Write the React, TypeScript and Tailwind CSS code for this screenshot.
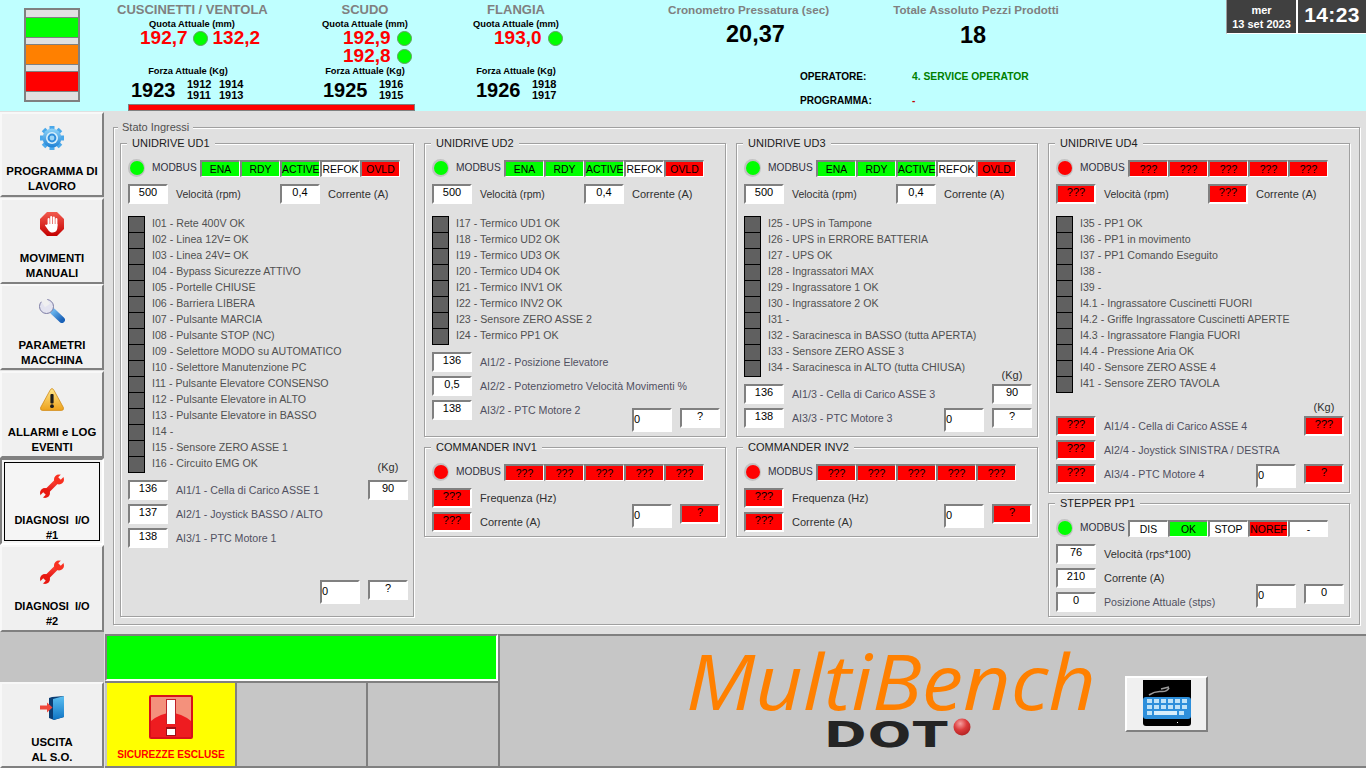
import React from "react";

const BOX = "border-t-2 border-l-2 border-r-2 border-b-2 border-t-[#808080] border-l-[#808080] border-r-white border-b-white";

function Val({ v, red, wide, left }: { v: string; red?: boolean; wide?: boolean; left?: boolean }) {
  return (
    <div className={`${BOX} w-[40px] shrink-0 text-[11px] leading-[13px] text-black ${wide ? "h-[24px] pt-[3px]" : "h-[20px]"} ${red ? "bg-[#ff0000]" : "bg-white"} ${left ? "text-left" : "text-center"}`}>
      {v}
    </div>
  );
}

function Led({ red }: { red?: boolean }) {
  return (
    <div className="w-[17px] h-[18px] shrink-0 rounded-full bg-[#c2c2c2] flex items-center justify-center">
      <div className={`w-[14px] h-[14px] rounded-full ${red ? "bg-[#ff0000]" : "bg-[#00ff00]"}`} />
    </div>
  );
}

type S = [string, "g" | "w" | "r"];
function Modbus({ red, items }: { red?: boolean; items: S[] }) {
  return (
    <div className="flex h-[18px] mt-[9px] items-start">
      <Led red={red} />
      <div className="ml-[7px] w-[48px] text-[10.2px] leading-[17px] text-[#303040]">MODBUS</div>
      <div className="flex mt-[1px]">
        {items.map(([t, c], i) => (
          <div
            key={i}
            className={`w-[40px] h-[17px] border-t-2 border-l-2 border-r border-b border-t-[#808080] border-l-[#808080] border-r-white border-b-white text-center text-[10.4px] leading-[15px] whitespace-nowrap text-black ${c === "g" ? "bg-[#00ff00]" : c === "r" ? "bg-[#ff0000]" : "bg-white"}`}
          >
            {t}
          </div>
        ))}
      </div>
    </div>
  );
}

const UNK: S[] = [["???", "r"], ["???", "r"], ["???", "r"], ["???", "r"], ["???", "r"]];
const OKS: S[] = [["ENA", "g"], ["RDY", "g"], ["ACTIVE", "g"], ["REFOK", "w"], ["OVLD", "r"]];

function VelRow({ a, b, red }: { a: string; b: string; red?: boolean }) {
  return (
    <div className="flex h-[20px] mt-[7px]">
      <Val v={a} red={red} />
      <div className="ml-[8px] w-[104px] text-[10.5px] leading-[20px] text-[#303030]">Velocità (rpm)</div>
      <Val v={b} red={red} />
      <div className="ml-[8px] text-[11px] leading-[20px] text-[#303030]">Corrente (A)</div>
    </div>
  );
}

function Inputs({ items }: { items: string[] }) {
  return (
    <div className="mt-[12px]">
      {items.map((t, i) => (
        <div key={t} className="flex h-[16px]">
          <div className={`w-[17px] shrink-0 bg-[#606060] border-l border-r border-t border-black ${i === items.length - 1 ? "h-[17px] border-b" : "h-[16px]"}`} />
          <div className="ml-[7px] text-[10.65px] leading-[15px] text-[#505050] whitespace-nowrap">{t}</div>
        </div>
      ))}
    </div>
  );
}

function Row({ v, label, red, dark, children, cls }: { v: string; label: string; red?: boolean; dark?: boolean; children?: React.ReactNode; cls?: string }) {
  return (
    <div className={`flex h-[20px] mb-[4px] ${cls ?? ""}`}>
      <Val v={v} red={red} />
      <div className={`ml-[8px] leading-[20px] whitespace-nowrap ${dark ? "text-[11px] text-[#303030]" : "text-[10.65px] text-[#505060]"}`}>{label}</div>
      {children}
    </div>
  );
}

function Kg({ cls }: { cls: string }) {
  return <div className={`h-[14px] w-[40px] ml-auto text-center text-[11px] leading-[14px] text-[#303030] ${cls}`}>(Kg)</div>;
}

function Right({ cls, children }: { cls?: string; children: React.ReactNode }) {
  return <div className={`ml-auto flex items-start gap-[8px] ${cls ?? ""}`}>{children}</div>;
}

function Group({ title, cls, children }: { title: string; cls: string; children: React.ReactNode }) {
  return (
    <fieldset className={`border border-[#a0a0a0] shadow-[inset_1px_1px_0_#ffffff,1px_1px_0_#ffffff] pl-[7px] pr-[5px] min-w-0 ${cls}`}>
      <legend className="-ml-[1px] px-[5px] text-[11px] leading-[13px] text-[#202020] bg-[#e0e0e0]">{title}</legend>
      {children}
    </fieldset>
  );
}

function Wrench({ bg, id }: { bg: string; id: string }) {
  return (
    <svg width="24" height="24" viewBox="0 0 24 24">
      <defs>
        <linearGradient id={id} x1="0" y1="0" x2="0" y2="1">
          <stop offset="0" stopColor="#ff4a3a" />
          <stop offset="1" stopColor="#e01010" />
        </linearGradient>
      </defs>
      <line x1="5" y1="19" x2="19" y2="5" stroke={`url(#${id})`} strokeWidth="5" />
      <circle cx="19" cy="5.5" r="5" fill="#f83020" />
      <circle cx="5" cy="19" r="5" fill="#e81810" />
      <line x1="19.5" y1="4.5" x2="24" y2="0" stroke={bg} strokeWidth="3.6" />
      <line x1="4.5" y1="19.5" x2="0" y2="24" stroke={bg} strokeWidth="3.6" />
    </svg>
  );
}

function Gear() {
  const a = [0, 45, 90, 135, 180, 225, 270, 315];
  return (
    <svg width="24" height="24" viewBox="0 0 24 24">
      <defs>
        <linearGradient id="gr" x1="0" y1="0" x2="0" y2="1">
          <stop offset="0" stopColor="#8fd4f8" />
          <stop offset="1" stopColor="#1e82d6" />
        </linearGradient>
      </defs>
      {a.map((d) => (
        <rect key={d} x="9.5" y="0" width="5" height="6" transform={`rotate(${d} 12 12)`} fill="#4aa8ea" />
      ))}
      <circle cx="12" cy="12" r="9.4" fill="url(#gr)" />
      <circle cx="12" cy="12" r="6" fill="#d8f0fc" />
      <circle cx="12" cy="12" r="4.4" fill="#2f8edc" />
      <circle cx="12" cy="12" r="2.4" fill="#9fd6f5" />
    </svg>
  );
}

function Stop() {
  return (
    <svg width="24" height="24" viewBox="0 0 24 24">
      <defs>
        <linearGradient id="st" x1="0" y1="0" x2="0" y2="1">
          <stop offset="0" stopColor="#f25a4e" />
          <stop offset="1" stopColor="#c40000" />
        </linearGradient>
      </defs>
      <polygon points="7,0 17,0 24,7 24,17 17,24 7,24 0,17 0,7" fill="url(#st)" />
      <g fill="#ffffff">
        <rect x="7.6" y="6" width="2" height="9" rx="1" />
        <rect x="10.2" y="4" width="2" height="10" rx="1" />
        <rect x="12.8" y="4.6" width="2" height="10" rx="1" />
        <rect x="15.4" y="6" width="2" height="9" rx="1" />
        <path d="M7.6 12 H17.4 V16 Q17 20 13 20.5 H11 Q9 20 7.5 17 L5 13.5 Q5.4 12 7 13 Z" />
      </g>
    </svg>
  );
}

function BlueWrench() {
  return (
    <svg width="26" height="24" viewBox="0 0 26 24">
      <defs>
        <linearGradient id="bw" x1="0" y1="0" x2="1" y2="1">
          <stop offset="0" stopColor="#6ab4ec" />
          <stop offset="1" stopColor="#1a62b8" />
        </linearGradient>
      </defs>
      <line x1="9" y1="8" x2="23" y2="21" stroke="#c8c8dc" strokeWidth="6" />
      <line x1="14" y1="12.5" x2="23" y2="21" stroke="url(#bw)" strokeWidth="6" strokeLinecap="round" />
      <circle cx="7.5" cy="7.5" r="7" fill="#e4e4f0" stroke="#7c7ca4" strokeWidth="1" />
      <line x1="8.5" y1="6.5" x2="3" y2="-2" stroke="#f0f0f0" strokeWidth="6" />
    </svg>
  );
}

function Warn() {
  return (
    <svg width="24" height="23" viewBox="0 0 24 23">
      <defs>
        <linearGradient id="wa" x1="0" y1="0" x2="0" y2="1">
          <stop offset="0" stopColor="#ffe88c" />
          <stop offset="1" stopColor="#eda11a" />
        </linearGradient>
      </defs>
      <path d="M12 .6 Q13 .6 14 2.4 L23.4 19.6 Q24 22.4 21.6 22.4 H2.4 Q0 22.4 .6 19.6 L10 2.4 Q11 .6 12 .6 Z" fill="url(#wa)" stroke="#d08a18" strokeWidth=".8" />
      <rect x="10.4" y="6" width="3.2" height="9.5" rx="1" fill="#1c1c1c" />
      <circle cx="12" cy="18.2" r="1.9" fill="#1c1c1c" />
    </svg>
  );
}

function Door() {
  return (
    <svg width="24" height="24" viewBox="0 0 24 24">
      <defs>
        <linearGradient id="dr" x1="0" y1="0" x2="0" y2="1">
          <stop offset="0" stopColor="#5cc0f2" />
          <stop offset="1" stopColor="#0f74c4" />
        </linearGradient>
      </defs>
      <polygon points="12,1 24,0 24,21 14,24 9,22 9,2" fill="#0c3e74" />
      <polygon points="13,3 24,0 24,21 13,24" fill="url(#dr)" />
      <polygon points="0,9.5 7,9.5 7,6.5 12.5,11.5 7,16.5 7,13.5 0,13.5" fill="#f0483c" />
    </svg>
  );
}

function Alert() {
  return (
    <svg width="44" height="44" viewBox="0 0 44 44">
      <rect x="0" y="0" width="44" height="44" rx="2" fill="#d8101a" />
      <rect x="2" y="2" width="40" height="40" fill="#ee1c20" />
      <path d="M2 2 H42 V26 Q22 10 2 26 Z" fill="#f4917c" />
      <rect x="17" y="4" width="10" height="25" fill="#c02028" />
      <rect x="18" y="5" width="8" height="24" fill="#ffffff" />
      <rect x="17" y="32" width="10" height="9" fill="#a01018" />
      <rect x="18" y="34" width="8" height="6" fill="#ffffff" />
    </svg>
  );
}

function Keyboard() {
  const cols = [5, 12, 19, 26, 33, 40];
  return (
    <svg width="48" height="46" viewBox="0 0 48 46">
      <path d="M0 0 H48 V43 Q48 46 45 46 H3 Q0 46 0 43 Z" fill="#000000" />
      <path d="M6 15 Q12 11 18 11.5 Q24 12 26 8 M18 9 L26 7" stroke="#9a9a9a" strokeWidth="1.6" fill="none" />
      <rect x="0" y="17" width="48" height="22" rx="3" fill="#2d8fdb" />
      {cols.map((x) => (
        <rect key={`a${x}`} x={x - 1} y="19" width="5" height="4" fill="#bfe3f8" />
      ))}
      {cols.map((x) => (
        <rect key={`b${x}`} x={x - 1} y="25" width="5" height="4" fill="#bfe3f8" />
      ))}
      <rect x="4" y="31" width="5" height="4" fill="#bfe3f8" />
      <rect x="11" y="31" width="23" height="4" fill="#d8eefb" />
      <rect x="36" y="31" width="5" height="4" fill="#bfe3f8" />
      <rect x="34" y="42" width="1" height="1" fill="#ffffff" />
    </svg>
  );
}

function Nav({ icon, lines, h, pt, mt, selected, size }: { icon: React.ReactNode; lines: string[]; h: string; pt: string; mt: string; selected?: boolean; size?: string }) {
  const inner = (
    <>
      <div className="h-[24px] flex justify-center">{icon}</div>
      <div className={`${mt} ${size ?? "text-[11.4px]"} text-center font-bold leading-[15px] text-black whitespace-pre`}>
        {lines.map((l) => (
          <div key={l}>{l}</div>
        ))}
      </div>
    </>
  );
  if (selected) {
    return (
      <div className={`${h} w-[104px] shrink-0 border-2 border-t-[#808080] border-l-[#808080] border-r-white border-b-white bg-[#f5f5f5] p-[2px]`}>
        <div className={`h-full border border-black ${pt}`}>{inner}</div>
      </div>
    );
  }
  return (
    <div className={`${h} ${pt} w-[104px] shrink-0 border-2 border-t-[#f8f8f8] border-l-[#f8f8f8] border-r-[#808080] border-b-[#808080] bg-[#f0f0f0]`}>{inner}</div>
  );
}

function Dot() {
  return <div className="w-[15px] h-[15px] rounded-full bg-[#00ff00] border border-[#60a060] shrink-0" />;
}

function Num({ v }: { v: string }) {
  return <span className="text-[19px] font-bold leading-[18px] text-[#ff0000]">{v}</span>;
}

function Small({ a, b }: { a: string; b: string }) {
  return (
    <div className="text-[11px] font-bold leading-[11px] text-black">
      <div>{a}</div>
      <div>{b}</div>
    </div>
  );
}

const cap = "text-[9.3px] font-bold leading-[10px] text-black text-center whitespace-nowrap";
const title = "h-[19px] text-[13px] font-bold leading-[20px] text-[#808080] text-center whitespace-nowrap";

export default function App() {
  return (
    <div className="w-[1366px] h-[768px] overflow-hidden flex flex-col bg-[#e0e0e0] font-['Liberation_Sans',Arial,sans-serif]">
      {/* header */}
      <header className="h-[111px] shrink-0 bg-[#bfffff] flex">
        <div className="ml-[24px] mt-[8px] w-[56px] h-[94px] border-2 border-[#808080] bg-[#e0e0e0] flex flex-col pt-[7px]">
          <div className="h-[21px] bg-[#00ff00] border-y border-[#808080]" />
          <div className="h-[6px]" />
          <div className="h-[21px] bg-[#ff8000] border-y border-[#808080]" />
          <div className="h-[6px]" />
          <div className="h-[21px] bg-[#ff0000] border-y border-[#808080]" />
        </div>

        <div className="ml-[37px] w-[298px] flex flex-col">
          <div className="flex h-[104px]">
            <div className="w-[150px]">
              <div className={title}>CUSCINETTI / VENTOLA</div>
              <div className={cap}>Quota Attuale (mm)</div>
              <div className="h-[37px]">
                <div className="h-[18px] flex items-center ml-[23px] gap-[5px]">
                  <Num v="192,7" />
                  <Dot />
                  <Num v="132,2" />
                </div>
              </div>
              <div className={`${cap} pr-[8px]`}>Forza Attuale (Kg)</div>
              <div className="flex mt-[3px] ml-[14px] items-center">
                <div className="text-[20px] font-bold leading-[22px] text-black w-[56px]">1923</div>
                <div className="w-[32px]"><Small a="1912" b="1911" /></div>
                <Small a="1914" b="1913" />
              </div>
            </div>
            <div className="ml-[48px] w-[100px]">
              <div className={title}>SCUDO</div>
              <div className={cap}>Quota Attuale (mm)</div>
              <div className="h-[37px] pl-[28px]">
                <div className="h-[18px] flex items-center gap-[6px]"><Num v="192,9" /><Dot /></div>
                <div className="h-[18px] flex items-center gap-[6px]"><Num v="192,8" /><Dot /></div>
              </div>
              <div className={cap}>Forza Attuale (Kg)</div>
              <div className="flex mt-[3px] ml-[8px] items-center">
                <div className="text-[20px] font-bold leading-[22px] text-black w-[56px]">1925</div>
                <Small a="1916" b="1915" />
              </div>
            </div>
          </div>
          <div className="ml-[11px] w-[287px] h-[7px] bg-[#ff0000] border border-[#808080]" />
        </div>

        <div className="ml-[51px] w-[100px]">
          <div className={title}>FLANGIA</div>
          <div className={cap}>Quota Attuale (mm)</div>
          <div className="h-[37px] pl-[28px]">
            <div className="h-[18px] flex items-center gap-[6px]"><Num v="193,0" /><Dot /></div>
          </div>
          <div className={cap}>Forza Attuale (Kg)</div>
          <div className="flex mt-[3px] ml-[10px] items-center">
            <div className="text-[20px] font-bold leading-[22px] text-black w-[56px]">1926</div>
            <Small a="1918" b="1917" />
          </div>
        </div>

        <div className="ml-[101px] w-[400px] flex flex-col">
          <div className="flex h-[70px]">
            <div className="w-[226px] pt-[3px]">
              <div className="w-[163px] text-center text-[11.7px] font-bold leading-[13px] text-[#808080] whitespace-nowrap">Cronometro Pressatura (sec)</div>
              <div className="ml-[59px] mt-[5px] text-[23.5px] font-bold leading-[26px] text-black">20,37</div>
            </div>
            <div className="pt-[3px]">
              <div className="w-[166px] text-center text-[11.6px] font-bold leading-[13px] text-[#808080] whitespace-nowrap">Totale Assoluto Pezzi Prodotti</div>
              <div className="ml-[67px] mt-[6px] text-[23.5px] font-bold leading-[26px] text-black">18</div>
            </div>
          </div>
          <div className="ml-[133px] flex h-[14px] text-[10.1px] font-bold leading-[14px]">
            <div className="w-[112px] text-black">OPERATORE:</div>
            <div className="text-[#008000] whitespace-nowrap text-[10.3px]">4. SERVICE OPERATOR</div>
          </div>
          <div className="ml-[133px] mt-[10px] flex h-[14px] text-[10.1px] font-bold leading-[14px]">
            <div className="w-[112px] text-black">PROGRAMMA:</div>
            <div className="text-[#c00000]">-</div>
          </div>
        </div>

        <div className="ml-auto flex h-[34px]">
          <div className="w-[72px] bg-[#404040] border-l border-r-2 border-b border-l-[#a0a0a0] border-r-white border-b-white text-center text-white text-[11px] font-bold leading-[14px] pt-[3px]">
            <div>mer</div>
            <div>13 set 2023</div>
          </div>
          <div className="w-[68px] bg-[#404040] border-b border-b-white text-center text-white text-[21px] font-bold leading-[30px] tracking-[0.4px]">14:23</div>
        </div>
      </header>

      {/* middle */}
      <div className="h-[521px] shrink-0 flex">
        <nav className="w-[104px] shrink-0 pt-[1px] flex flex-col">
          <Nav h="h-[85px] mb-[1px]" pt="pt-[12px]" mt="mt-[14px]" icon={<Gear />} lines={["PROGRAMMA DI", "LAVORO"]} />
          <Nav h="h-[86px]" pt="pt-[12px]" mt="mt-[15px]" icon={<Stop />} lines={["MOVIMENTI", "MANUALI"]} />
          <Nav h="h-[86px] mb-[1px]" pt="pt-[13px]" mt="mt-[15px]" icon={<BlueWrench />} lines={["PARAMETRI", "MACCHINA"]} />
          <Nav h="h-[87px]" pt="pt-[15px]" mt="mt-[13px]" icon={<Warn />} lines={["ALLARMI e LOG", "EVENTI"]} />
          <Nav selected size="text-[11px]" h="h-[87px]" pt="pt-[11px]" mt="mt-[15px]" icon={<Wrench id="wr1" bg="#f5f5f5" />} lines={["DIAGNOSI  I/O", "#1"]} />
          <Nav size="text-[11px]" h="h-[87px]" pt="pt-[13px]" mt="mt-[15px]" icon={<Wrench id="wr2" bg="#f0f0f0" />} lines={["DIAGNOSI  I/O", "#2"]} />
        </nav>

        <main className="ml-[9px] mt-[10px] w-[1247px] h-[504px]">
          <fieldset className="h-full border border-[#a0a0a0] shadow-[inset_1px_1px_0_#ffffff,1px_1px_0_#ffffff] min-w-0">
            <legend className="ml-[4px] px-[4px] text-[11px] leading-[13px] text-[#505050] bg-[#e0e0e0]">Stato Ingressi</legend>
            <div className="flex gap-[10px] pl-[6px] pt-[3px]">
              {/* UD1 */}
              <Group title="UNIDRIVE UD1" cls="w-[294px] h-[480px]">
                <Modbus items={OKS} />
                <VelRow a="500" b="0,4" />
                <Inputs items={["I01 - Rete 400V OK", "I02 - Linea 12V= OK", "I03 - Linea 24V= OK", "I04 - Bypass Sicurezze ATTIVO", "I05 - Portelle CHIUSE", "I06 - Barriera LIBERA", "I07 - Pulsante MARCIA", "I08 - Pulsante STOP (NC)", "I09 - Selettore MODO su AUTOMATICO", "I10 - Selettore Manutenzione PC", "I11 - Pulsante Elevatore CONSENSO", "I12 - Pulsante Elevatore in ALTO", "I13 - Pulsante Elevatore in BASSO", "I14 -", "I15 - Sensore ZERO ASSE 1", "I16 - Circuito EMG OK"]} />
                <Kg cls="-mt-[12px] mb-[6px]" />
                <Row v="136" label="AI1/1 - Cella di Carico ASSE 1"><Right><Val v="90" /></Right></Row>
                <Row v="137" label="AI2/1 - Joystick BASSO / ALTO" />
                <Row v="138" label="AI3/1 - PTC Motore 1" />
                <div className="mt-[32px] flex"><Right><Val wide left v="0" /><Val v="?" /></Right></div>
              </Group>

              {/* UD2 + INV1 */}
              <div className="w-[302px] flex flex-col gap-[4px]">
                <Group title="UNIDRIVE UD2" cls="h-[300px]">
                  <Modbus items={OKS} />
                  <VelRow a="500" b="0,4" />
                  <Inputs items={["I17 - Termico UD1 OK", "I18 - Termico UD2 OK", "I19 - Termico UD3 OK", "I20 - Termico UD4 OK", "I21 - Termico INV1 OK", "I22 - Termico INV2 OK", "I23 - Sensore ZERO ASSE 2", "I24 - Termico PP1 OK"]} />
                  <div className="h-[8px]" />
                  <Row v="136" label="AI1/2 - Posizione Elevatore" />
                  <Row v="0,5" label="AI2/2 - Potenziometro Velocità Movimenti %" />
                  <Row v="138" label="AI3/2 - PTC Motore 2"><Right cls="mt-[8px]"><Val wide left v="0" /><Val v="?" /></Right></Row>
                </Group>
                <Group title="COMMANDER INV1" cls="h-[96px]">
                  <Modbus red items={UNK} />
                  <div className="mt-[7px]">
                    <Row red dark v="???" label="Frequenza (Hz)" />
                    <Row red dark v="???" label="Corrente (A)"><Right cls="-mt-[8px]"><Val wide left v="0" /><Val red v="?" /></Right></Row>
                  </div>
                </Group>
              </div>

              {/* UD3 + INV2 */}
              <div className="w-[302px] flex flex-col gap-[4px]">
                <Group title="UNIDRIVE UD3" cls="h-[300px]">
                  <Modbus items={OKS} />
                  <VelRow a="500" b="0,4" />
                  <Inputs items={["I25 - UPS in Tampone", "I26 - UPS in ERRORE BATTERIA", "I27 - UPS OK", "I28 - Ingrassatori MAX", "I29 - Ingrassatore 1 OK", "I30 - Ingrassatore 2 OK", "I31 -", "I32 - Saracinesca in BASSO (tutta APERTA)", "I33 - Sensore ZERO ASSE 3", "I34 - Saracinesca in ALTO (tutta CHIUSA)"]} />
                  <Kg cls="-mt-[8px] mb-[2px]" />
                  <Row v="136" label="AI1/3 - Cella di Carico ASSE 3"><Right><Val v="90" /></Right></Row>
                  <Row v="138" label="AI3/3 - PTC Motore 3"><Right><Val wide left v="0" /><Val v="?" /></Right></Row>
                </Group>
                <Group title="COMMANDER INV2" cls="h-[96px]">
                  <Modbus red items={UNK} />
                  <div className="mt-[7px]">
                    <Row red dark v="???" label="Frequenza (Hz)" />
                    <Row red dark v="???" label="Corrente (A)"><Right cls="-mt-[8px]"><Val wide left v="0" /><Val red v="?" /></Right></Row>
                  </div>
                </Group>
              </div>

              {/* UD4 + stepper */}
              <div className="w-[302px] flex flex-col gap-[4px]">
                <Group title="UNIDRIVE UD4" cls="h-[356px]">
                  <Modbus red items={UNK} />
                  <VelRow red a="???" b="???" />
                  <Inputs items={["I35 - PP1 OK", "I36 - PP1 in movimento", "I37 - PP1 Comando Eseguito", "I38 -", "I39 -", "I4.1 - Ingrassatore Cuscinetti FUORI", "I4.2 - Griffe Ingrassatore Cuscinetti APERTE", "I4.3 - Ingrassatore Flangia FUORI", "I4.4 - Pressione Aria OK", "I40 - Sensore ZERO ASSE 4", "I41 - Sensore ZERO TAVOLA"]} />
                  <Kg cls="mt-[8px] mb-[2px]" />
                  <Row red v="???" label="AI1/4 - Cella di Carico ASSE 4"><Right><Val red v="???" /></Right></Row>
                  <Row red v="???" label="AI2/4 - Joystick SINISTRA / DESTRA" />
                  <Row red v="???" label="AI3/4 - PTC Motore 4"><Right><Val wide left v="0" /><Val red v="?" /></Right></Row>
                </Group>
                <Group title="STEPPER PP1" cls="h-[120px]">
                  <Modbus items={[["DIS", "w"], ["OK", "g"], ["STOP", "w"], ["NOREF", "r"], ["-", "w"]]} />
                  <div className="mt-[7px]">
                    <Row dark v="76" label="Velocità (rps*100)" />
                    <Row dark v="210" label="Corrente (A)" />
                    <Row v="0" label="Posizione Attuale (stps)"><Right cls="-mt-[8px]"><Val wide left v="0" /><Val v="0" /></Right></Row>
                  </div>
                </Group>
              </div>
            </div>
          </fieldset>
        </main>
      </div>

      {/* bottom */}
      <div className="flex-1 flex">
        <div className="w-[105px] shrink-0 flex flex-col">
          <div className="h-[50px] w-[104px] bg-[#c4c4c4]" />
          <Nav h="h-[86px]" pt="pt-[12px]" mt="mt-[15px]" icon={<Door />} lines={["USCITA", "AL S.O."]} />
        </div>
        <div className="w-[393px] shrink-0 flex flex-col">
          <div className="h-[2px]" />
          <div className="h-[47px] bg-[#00ff00] border-2 border-t-[#808080] border-l-[#808080] border-r-white border-b-white" />
          <div className="flex-1 flex border-y-2 border-[#808080] bg-[#c6c6c6] pl-[2px]">
            <div className="w-[128px] bg-[#ffff00] flex flex-col items-center pt-[12px]">
              <Alert />
              <div className="mt-[9px] text-[10.1px] font-bold leading-[13px] text-[#ff0000] whitespace-nowrap">SICUREZZE ESCLUSE</div>
            </div>
            <div className="w-[131px] border-l-2 border-[#808080]" />
            <div className="w-[131px] border-l-2 border-[#808080]" />
          </div>
        </div>
        <div className="flex-1 mt-[2px] border-l-2 border-t-2 border-b-2 border-[#808080] bg-[#c6c6c6] flex items-start pl-[190px]">
          <div className="w-[404px] shrink-0">
            <div className="font-['Open_Sans'] italic text-[77px] leading-[62px] text-[#ff8000] whitespace-nowrap mt-[14px] -ml-[4px] origin-left scale-x-[1.075]">MultiBench</div>
            <div className="flex items-start ml-[134px] mt-[9px]">
              <div className="font-['DejaVu_Sans'] font-bold text-[36px] leading-[28px] text-[#242424] origin-left scale-x-[1.42] w-[124px] tracking-[1px]">DOT</div>
              <svg width="18" height="18" viewBox="0 0 18 18" className="ml-[5px] -mt-[3px]">
                <defs>
                  <radialGradient id="ball" cx="0.4" cy="0.3" r="0.75">
                    <stop offset="0" stopColor="#f6a0a0" />
                    <stop offset="0.5" stopColor="#dc3c3c" />
                    <stop offset="1" stopColor="#b02020" />
                  </radialGradient>
                </defs>
                <circle cx="9" cy="9" r="8.5" fill="url(#ball)" />
              </svg>
            </div>
          </div>
          <div className="ml-[31px] mt-[40px] w-[83px] h-[56px] bg-[#f0f0f0] border-2 border-t-white border-l-white border-r-[#808080] border-b-[#808080] flex justify-center pt-[2px]">
            <Keyboard />
          </div>
        </div>
      </div>
    </div>
  );
}
